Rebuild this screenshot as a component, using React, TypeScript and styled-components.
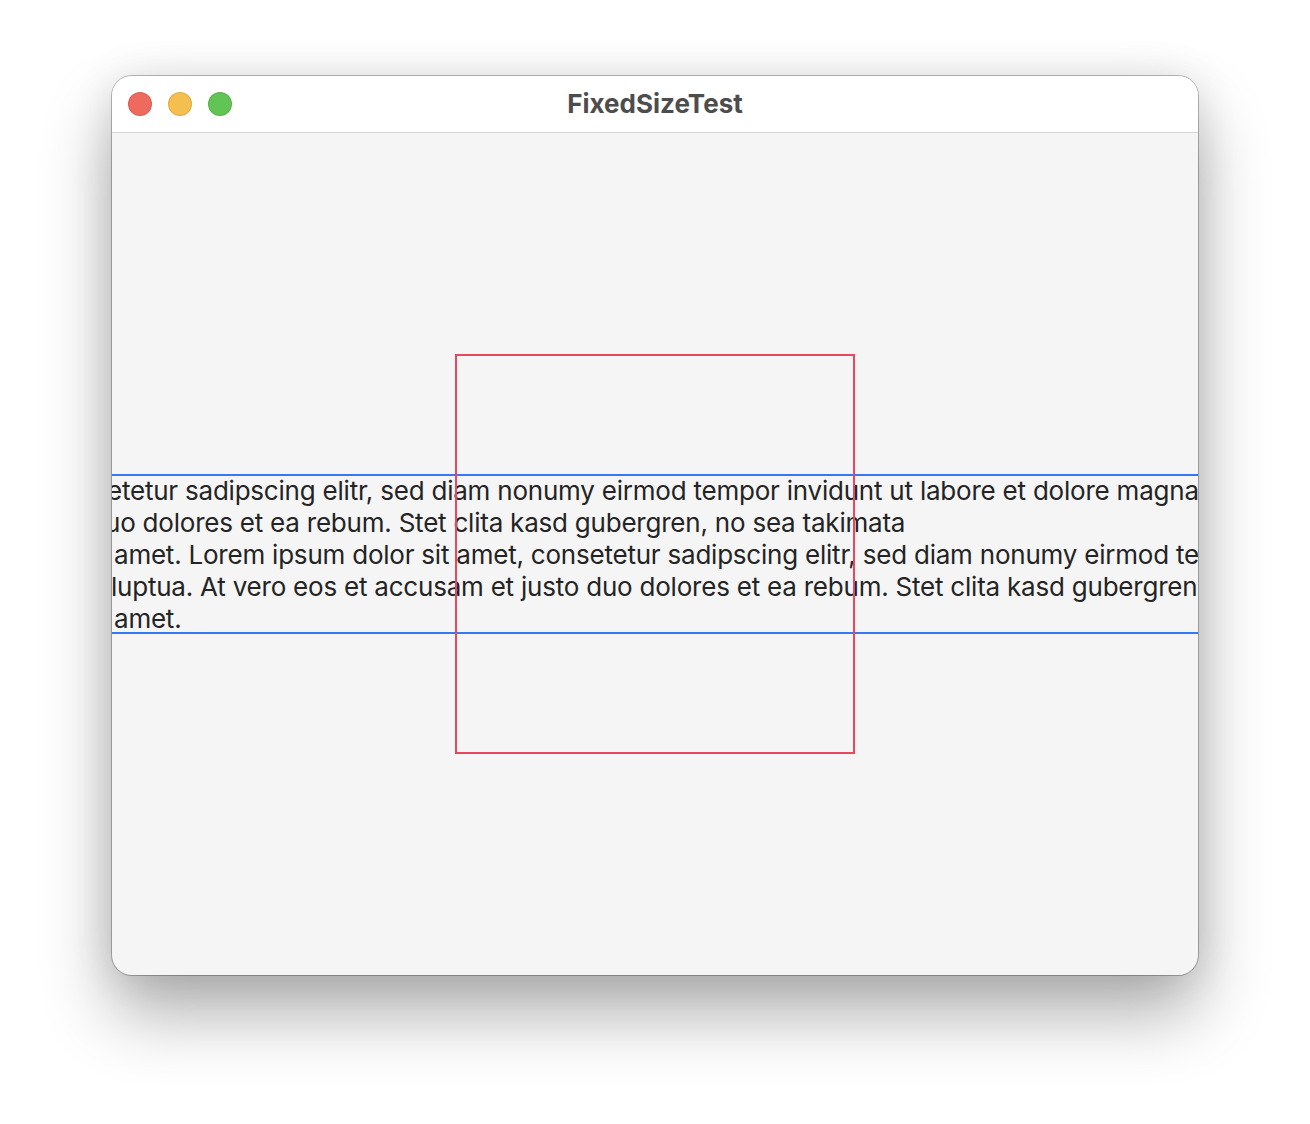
import styled, { createGlobalStyle } from 'styled-components';

const GlobalStyle = createGlobalStyle`
  html,
  body {
    margin: 0;
    background: #ffffff;
  }
`;

const LINES: { text: string; indent: number }[] = [
  {
    text: 'etetur sadipscing elitr, sed diam nonumy eirmod tempor invidunt ut labore et dolore magna aliquyam erat, sed diam voluptua. At',
    indent: -5,
  },
  { text: 'uo dolores et ea rebum. Stet clita kasd gubergren, no sea takimata', indent: -7 },
  {
    text: 'amet. Lorem ipsum dolor sit amet, consetetur sadipscing elitr, sed diam nonumy eirmod tempor invidunt ut labore',
    indent: 2,
  },
  {
    text: 'luptua. At vero eos et accusam et justo duo dolores et ea rebum. Stet clita kasd gubergren, no sea takimata',
    indent: -1,
  },
  { text: 'amet.', indent: 2 },
];

const LIGHTS = ['#ee6a5f', '#f5bf4f', '#61c454'];

/** macOS window hosting the fixed-size layout test. */
export default function App() {
  return (
    <Page>
      <GlobalStyle />
      <Window>
        <TitleBar>
          <Lights>
            {LIGHTS.map((c) => (
              <Light key={c} $color={c} />
            ))}
          </Lights>
          <Title>FixedSizeTest</Title>
          <span />
        </TitleBar>
        <Stage>
          <TextFrame>
            {LINES.map((l, i) => (
              <Line key={i} $indent={l.indent}>
                {l.text}
              </Line>
            ))}
          </TextFrame>
          <FixedBox />
        </Stage>
      </Window>
    </Page>
  );
}

const Page = styled.div`
  width: 1310px;
  height: 1124px;
  box-sizing: border-box;
  padding: 76px 0 0 112px;
  overflow: hidden;
`;

const Window = styled.div`
  display: flex;
  flex-direction: column;
  width: 1086px;
  height: 899px;
  overflow: hidden;
  border-radius: 20px;
  background: #f5f5f5;
  box-shadow:
    0 0 0 1px rgba(0, 0, 0, 0.26),
    0 38px 70px rgba(0, 0, 0, 0.32),
    0 0 40px rgba(0, 0, 0, 0.1);
`;

const TitleBar = styled.div`
  display: grid;
  flex: none;
  grid-template-columns: 1fr auto 1fr;
  align-items: center;
  height: 56px;
  border-bottom: 1px solid #d6d6d6;
  background: #ffffff;
`;

const Lights = styled.div`
  display: flex;
  gap: 16px;
  padding-left: 16px;
`;

const Light = styled.span<{ $color: string }>`
  display: block;
  width: 24px;
  height: 24px;
  box-sizing: border-box;
  border: 1px solid rgba(0, 0, 0, 0.1);
  border-radius: 50%;
  background: ${(p) => p.$color};
`;

const Title = styled.div`
  color: #4d4d4d;
  font-family: Inter, 'Liberation Sans', sans-serif;
  font-size: 26px;
  font-weight: 700;
  line-height: 1;
`;

const Stage = styled.div`
  position: relative;
  display: flex;
  flex: 1;
  align-items: center;
  justify-content: center;
  overflow: hidden;
`;

const TextFrame = styled.div`
  flex: none;
  width: 1800px;
  height: 160px;
  box-shadow: inset 0 2px 0 #3478f6, inset 0 -2px 0 #3478f6;
  color: #242424;
  font-family: Inter, 'Liberation Sans', sans-serif;
  font-size: 26px;
  letter-spacing: -0.22px;
  line-height: 32px;
`;

const Line = styled.div<{ $indent: number }>`
  padding-left: calc(50% - 543px + ${(p) => p.$indent}px);
  padding-top: 1px;
  margin-bottom: -1px;
  white-space: nowrap;
`;

const FixedBox = styled.div`
  position: absolute;
  top: 50%;
  left: 50%;
  width: 400px;
  height: 400px;
  box-sizing: border-box;
  border: 2px solid #e8485e;
  transform: translate(-50%, -50%);
`;
